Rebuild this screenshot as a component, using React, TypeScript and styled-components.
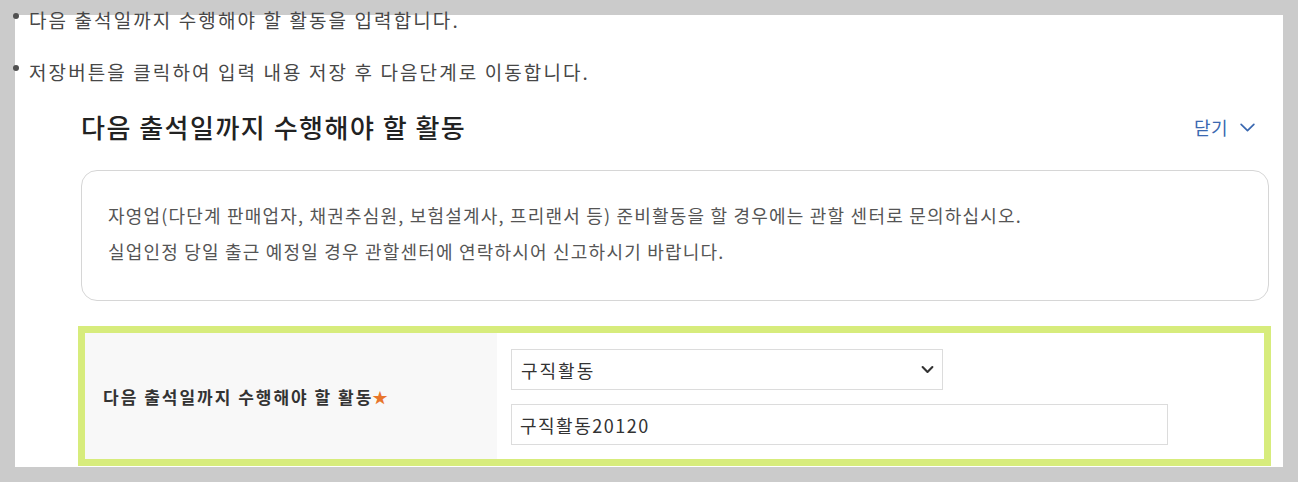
import React from 'react'
import styled, { createGlobalStyle } from 'styled-components'

const GlobalStyle = createGlobalStyle`
  html, body {
    margin: 0;
    padding: 0;
    background: #cbcbcb;
    font-family: "Noto Sans CJK KR", "Noto Sans", sans-serif;
  }
`

const Page = styled.div`
  width: 1298px;
  height: 482px;
  overflow: hidden;
  padding: 15px 15px 0 15px;
  box-sizing: border-box;
`

const Panel = styled.div`
  background: #fff;
  height: 452px;
  overflow: visible;
`

const GuideList = styled.ul`
  list-style: none;
  margin: 0;
  padding: 0;
  position: relative;
  top: -8px;
  display: flex;
  flex-direction: column;
  gap: 26px;
`

const GuideItem = styled.li`
  display: flex;
  align-items: flex-start;
  font-size: 19px;
  line-height: 26px;
  color: #474747;
  letter-spacing: 2.1px;
`

const Dot = styled.span`
  width: 6px;
  height: 6px;
  border-radius: 50%;
  background: #505050;
  margin: 6px 10px 0 -2px;
  flex-shrink: 0;
`

const Section = styled.section`
  margin: 0 14px 0 66px;
`

const Header = styled.div`
  display: flex;
  align-items: center;
  justify-content: space-between;
  height: 34px;
  margin-top: 17px;
`

const Title = styled.h2`
  margin: 0;
  font-size: 26px;
  font-weight: 500;
  line-height: 34px;
  color: #222;
  letter-spacing: 1.5px;
`

const CloseButton = styled.button`
  display: flex;
  align-items: center;
  gap: 11px;
  border: 0;
  background: none;
  padding: 0 13px 0 0;
  font-family: inherit;
  font-size: 18px;
  letter-spacing: 0.5px;
  color: #3a68b0;
  cursor: pointer;
`

const InfoBox = styled.div`
  margin-top: 26px;
  border: 1px solid #d6d6d6;
  border-radius: 16px;
  padding: 26px 26px 31px;
  box-sizing: border-box;
  height: 131px;
`

const InfoLine = styled.p`
  margin: 0;
  font-size: 18px;
  line-height: 36px;
  color: #555;
  letter-spacing: 1.2px;
  white-space: nowrap;
`

const FormTable = styled.div`
  margin: 25px -2px 0 -3px;
  border: 7px solid #d7ec7c;
  display: flex;
`

const LabelCell = styled.div`
  width: 412px;
  background: #f8f8f8;
  display: flex;
  align-items: center;
  padding-left: 18px;
  box-sizing: border-box;
  font-size: 17px;
  font-weight: 700;
  color: #333;
  letter-spacing: 2px;
`

const Required = styled.span`
  color: #e8762c;
  font-size: 15px;
  letter-spacing: 0;
  margin-left: -1px;
`

const FieldCell = styled.div`
  flex: 1;
  display: flex;
  flex-direction: column;
  gap: 14px;
  padding: 16px 14px 14px;
`

const SelectBox = styled.div`
  width: 432px;
  height: 41px;
  border: 1px solid #dcdcdc;
  box-sizing: border-box;
  display: flex;
  align-items: center;
  justify-content: space-between;
  padding: 0 8px 0 9px;
  font-size: 18px;
  letter-spacing: 2px;
  color: #333;
`

const TextInput = styled.input`
  width: 657px;
  height: 41px;
  border: 1px solid #dcdcdc;
  box-sizing: border-box;
  padding: 0 8px;
  font-family: inherit;
  font-size: 18px;
  letter-spacing: 1.5px;
  color: #333;
  outline: none;
`

const Chevron = ({ color, size, width }: { color: string; size: number; width: number }) => (
  <svg width={size} height={size} viewBox="0 0 16 16" fill="none">
    <path d="M2 5 L8 11 L14 5" stroke={color} strokeWidth={width} strokeLinecap="round" strokeLinejoin="round" />
  </svg>
)

export default function App() {
  return (
    <Page>
      <GlobalStyle />
      <Panel>
        <GuideList>
          <GuideItem><Dot />다음 출석일까지 수행해야 할 활동을 입력합니다.</GuideItem>
          <GuideItem><Dot />저장버튼을 클릭하여 입력 내용 저장 후 다음단계로 이동합니다.</GuideItem>
        </GuideList>

        <Section>
          <Header>
            <Title>다음 출석일까지 수행해야 할 활동</Title>
            <CloseButton>
              닫기
              <Chevron color="#3a68b0" size={17} width={1.6} />
            </CloseButton>
          </Header>

          <InfoBox>
            <InfoLine>자영업(다단계 판매업자, 채권추심원, 보험설계사, 프리랜서 등) 준비활동을 할 경우에는 관할 센터로 문의하십시오.</InfoLine>
            <InfoLine>실업인정 당일 출근 예정일 경우 관할센터에 연락하시어 신고하시기 바랍니다.</InfoLine>
          </InfoBox>

          <FormTable>
            <LabelCell>
              다음 출석일까지 수행해야 할 활동<Required>★</Required>
            </LabelCell>
            <FieldCell>
              <SelectBox>
                구직활동
                <Chevron color="#333" size={13} width={2.6} />
              </SelectBox>
              <TextInput defaultValue="구직활동20120" />
            </FieldCell>
          </FormTable>
        </Section>
      </Panel>
    </Page>
  )
}
